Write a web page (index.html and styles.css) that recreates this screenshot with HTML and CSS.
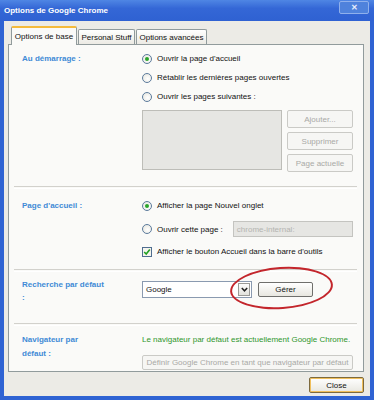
FILE: index.html
```html
<!DOCTYPE html>
<html lang="fr">
<head>
  <meta charset="UTF-8">
  <title>Options de Google Chrome</title>
  <link rel="stylesheet" href="styles.css">
</head>
<body>
  <div id="window">
    <div id="titleBar">
      <span class="title">Options de Google Chrome</span>
      <span class="closeX">&#x2715;</span>
    </div>
    <div id="client">
      <div class="tabs">
        <div class="tab tab-base active">Options de base</div>
        <div class="tab tab-perso">Personal Stuff</div>
        <div class="tab tab-adv">Options avancées</div>
      </div>
      <div id="panel">
        <div class="section s-start">
          <div class="label">Au démarrage :</div>
          <div class="content">
            <div class="opt"><span class="radio on"></span>Ouvrir la page d'accueil</div>
            <div class="opt"><span class="radio"></span>Rétablir les dernières pages ouvertes</div>
            <div class="opt"><span class="radio"></span>Ouvrir les pages suivantes :</div>
            <div class="pages">
              <div class="listbox"></div>
              <div class="sideButtons">
                <div class="btn disabled">Ajouter...</div>
                <div class="btn disabled">Supprimer</div>
                <div class="btn disabled">Page actuelle</div>
              </div>
            </div>
          </div>
        </div>
        <div class="sep"></div>
        <div class="section s-home">
          <div class="label">Page d'accueil :</div>
          <div class="content">
            <div class="opt"><span class="radio on"></span>Afficher la page Nouvel onglet</div>
            <div class="opt opt-url"><span class="radio"></span>Ouvrir cette page :<span class="urlInput">chrome-internal:</span></div>
            <div class="opt opt-check"><span class="check">
              <svg width="8" height="8" viewBox="0 0 8 8"><polyline points="1.2,4 3.2,6 6.8,1.6" fill="none" stroke="#21a121" stroke-width="1.6"/></svg>
            </span>Afficher le bouton Accueil dans la barre d'outils</div>
          </div>
        </div>
        <div class="sep"></div>
        <div class="section s-search">
          <div class="label">Recherche par défaut<br>:</div>
          <div class="content">
            <div class="searchRow">
              <div class="select">
                <span>Google</span>
                <span class="arrow">
                  <svg width="7" height="5" viewBox="0 0 7 5"><polyline points="0.8,1 3.5,3.8 6.2,1" fill="none" stroke="#222" stroke-width="1.5"/></svg>
                </span>
              </div>
              <div class="btn manage">Gérer</div>
            </div>
          </div>
        </div>
        <div class="sep"></div>
        <div class="section s-browser">
          <div class="label">Navigateur par<br>défaut :</div>
          <div class="content">
            <div class="greenText">Le navigateur par défaut est actuellement Google Chrome.</div>
            <div class="btn disabled wide">Définir Google Chrome en tant que navigateur par défaut</div>
          </div>
        </div>
      </div>
      <div class="footer">
        <div class="btn closeBtn">Close</div>
      </div>
    </div>
    <div class="ellipse"></div>
  </div>
</body>
</html>
```

FILE: styles.css
```css
body {
  margin: 0;
  font-family: "Liberation Sans", Arial, sans-serif;
  font-size: 8px;
  color: #111;
}
#window {
  position: relative;
  width: 374px;
  height: 400px;
  background: #2f63d3;
  display: flex;
  flex-direction: column;
}
#titleBar {
  height: 21px;
  flex: none;
  display: flex;
  align-items: center;
  justify-content: space-between;
  padding: 0 5px 0 4px;
  background: linear-gradient(#4f86e4, #3467d6 40%, #2f61d2);
}
#titleBar .title {
  color: #fff;
  font-weight: bold;
  font-size: 8px;
}
.closeX {
  align-self: flex-start;
  margin-top: 1px;
  width: 30px;
  height: 13px;
  box-sizing: border-box;
  border: 1px solid #8fb0ec;
  border-radius: 2px;
  background: #4f82dc;
  color: #e8eefc;
  font-size: 8px;
  font-weight: bold;
  display: flex;
  align-items: center;
  justify-content: center;
}
#client {
  flex: 1;
  margin: 0 4px 4px;
  background: #ecebe6;
  padding: 5px 6px 0 4px;
  display: flex;
  flex-direction: column;
}
.tabs {
  display: flex;
  align-items: flex-end;
  height: 18px;
  padding-left: 3px;
  position: relative;
  z-index: 1;
}
.tab {
  height: 15px;
  box-sizing: border-box;
  border: 1px solid #919b9c;
  border-bottom: none;
  border-radius: 2px 2px 0 0;
  background: linear-gradient(#ffffff, #eceae4);
  display: flex;
  align-items: center;
  justify-content: center;
  margin-right: 1px;
}
.tab.active {
  height: 19px;
  margin-bottom: -1px;
  border-top: 2px solid #f5bb3c;
  background: #fafaf8;
}
.tab-base { width: 66px; }
.tab-perso { width: 57px; }
.tab-adv { width: 71px; }
#panel {
  height: 328px;
  flex: none;
  box-sizing: border-box;
  border: 1px solid #919b9c;
  background: #fafaf8;
  padding: 0 6px 0 5px;
}
.section {
  display: grid;
  grid-template-columns: 120px 1fr;
  padding: 0 4px 0 8px;
}
.label {
  color: #3f8ad6;
  font-weight: bold;
  line-height: 19px;
}
.opt {
  display: flex;
  align-items: center;
  height: 19px;
}
.radio {
  width: 10px;
  height: 10px;
  box-sizing: border-box;
  border: 1px solid #5b7a9c;
  border-radius: 50%;
  background: radial-gradient(circle at 60% 60%, #fff, #e4e4dc);
  margin-right: 5px;
  display: flex;
  align-items: center;
  justify-content: center;
}
.radio.on::after {
  content: "";
  width: 4px;
  height: 4px;
  border-radius: 50%;
  background: #2aa52a;
}
.check {
  width: 10px;
  height: 10px;
  box-sizing: border-box;
  border: 1px solid #4f6d8f;
  background: #f4f4ee;
  margin-right: 5px;
  display: flex;
  align-items: center;
  justify-content: center;
}
.pages {
  display: flex;
  gap: 5px;
  margin-top: 4px;
}
.listbox {
  width: 140px;
  height: 60px;
  box-sizing: border-box;
  border: 1px solid #bdbdb8;
  background: #e6e6e3;
}
.sideButtons {
  flex: 1;
  display: flex;
  flex-direction: column;
  gap: 4px;
}
.btn {
  height: 18px;
  box-sizing: border-box;
  border: 1px solid #7c7c78;
  border-radius: 2px;
  background: linear-gradient(#ffffff, #e8e7e0);
  display: flex;
  align-items: center;
  justify-content: center;
}
.btn.disabled {
  border-color: #cacac6;
  background: #f6f6f4;
  color: #a9a9a6;
}
.s-start { padding-top: 4px; padding-bottom: 14px; }
.sep {
  height: 1px;
  border-top: 1px solid #d2d1cc;
  border-bottom: 1px solid #ffffff;
}
.s-home { padding-top: 7px; padding-bottom: 8px; }
.opt-url {
  height: 18px;
  margin-top: 5px;
}
.urlInput {
  margin-left: 10px;
  flex: 1;
  height: 16px;
  box-sizing: border-box;
  border: 1px solid #c4c4c0;
  background: #e6e6e3;
  color: #b4b4b0;
  padding-left: 3px;
  display: flex;
  align-items: center;
}
.opt-check { margin-top: 4px; }
.s-search { padding-top: 9px; padding-bottom: 19px; }
.s-search .label {
  line-height: 13px;
  margin-top: -3px;
}
.searchRow {
  display: flex;
  align-items: center;
  gap: 6px;
}
.select {
  width: 110px;
  height: 17px;
  box-sizing: border-box;
  border: 1px solid #8a9ab0;
  background: #fff;
  display: flex;
  align-items: center;
  justify-content: space-between;
  padding: 0 1px 0 3px;
}
.arrow {
  width: 12px;
  height: 13px;
  box-sizing: border-box;
  border: 1px solid #9a9a96;
  background: linear-gradient(#fdfdfd, #e2e2dc);
  display: flex;
  align-items: center;
  justify-content: center;
}
.btn.manage {
  width: 55px;
  height: 15px;
  border-color: #6f6f6c;
}
.s-browser { padding-top: 7px; }
.s-browser .label { line-height: 14px; }
.greenText {
  color: #2f962c;
  line-height: 14px;
}
.btn.wide {
  margin-top: 8px;
  height: 15px;
}
.footer {
  display: flex;
  justify-content: flex-end;
  padding-top: 5px;
}
.btn.closeBtn {
  width: 55px;
  height: 16px;
  border-color: #7d6a3e;
  box-shadow: inset 0 0 0 1px #f0bf5c;
}
.ellipse {
  position: absolute;
  left: 230px;
  top: 267px;
  width: 103px;
  height: 42px;
  box-sizing: border-box;
  border: 2px solid #c3262c;
  border-radius: 50%;
  transform: rotate(-4deg);
}
```
